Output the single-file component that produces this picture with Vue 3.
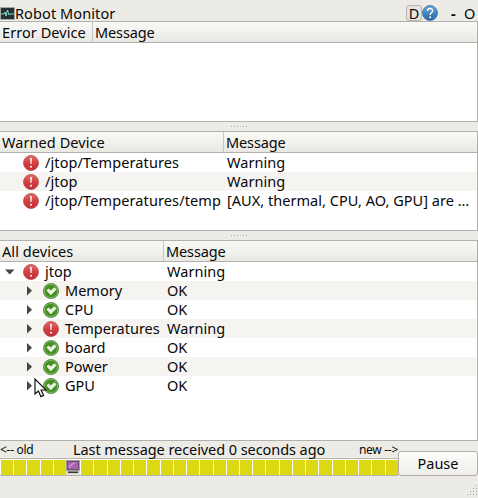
<script setup>
const warned = [
  { name: '/jtop/Temperatures', message: 'Warning' },
  { name: '/jtop', message: 'Warning' },
  { name: '/jtop/Temperatures/temp', message: '[AUX, thermal, CPU, AO, GPU] are …' },
]
const devices = [
  { name: 'jtop', message: 'Warning', ok: false, root: true },
  { name: 'Memory', message: 'OK', ok: true },
  { name: 'CPU', message: 'OK', ok: true },
  { name: 'Temperatures', message: 'Warning', ok: false },
  { name: 'board', message: 'OK', ok: true },
  { name: 'Power', message: 'OK', ok: true },
  { name: 'GPU', message: 'OK', ok: true },
]
const current = 5
</script>

<template>
  <div class="window">
    <svg class="defs" width="0" height="0">
      <defs>
        <linearGradient id="red" x1="0" y1="0" x2="0" y2="1">
          <stop offset="0" stop-color="#e0706c" /><stop offset=".5" stop-color="#d43e40" /><stop offset="1" stop-color="#c02e36" />
        </linearGradient>
        <linearGradient id="blue" x1="0" y1="0" x2="0" y2="1">
          <stop offset="0" stop-color="#6ba7d6" /><stop offset="1" stop-color="#2468a8" />
        </linearGradient>
        <symbol id="warn" viewBox="0 0 16 16">
          <circle cx="8" cy="8" r="7.5" fill="url(#red)" stroke="#b8494a" stroke-width=".8" />
          <path d="M7.1 3h1.8l-.4 6h-1z" fill="#fff" /><circle cx="8" cy="11.7" r="1" fill="#fff" />
        </symbol>
        <symbol id="ok" viewBox="0 0 16 16">
          <circle cx="8" cy="8" r="7.6" fill="#35831c" stroke="#4a8a38" stroke-width=".7" />
          <circle cx="8" cy="8" r="6.6" fill="#45911f" stroke="#91bd7b" stroke-width=".8" />
          <path d="M3.5 7.4 5.5 5.5l2.1 2.1 3.9-3.3 2 2.1-5.7 5.8z" fill="#eaf2e5" />
        </symbol>
      </defs>
    </svg>

    <header class="title">
      <svg class="logo" viewBox="0 0 15 13">
        <rect width="15" height="13" rx="1" fill="#a4a7a4" /><rect x="1" y="1" width="13" height="11" fill="#263032" />
        <path d="M1 7h3l1-2 1 4 1.5-6L9 8l1-1h4" fill="none" stroke="#86d9cc" stroke-width="1" />
      </svg>
      <span class="name">Robot Monitor</span>
      <span class="dock">D</span>
      <svg class="help" viewBox="0 0 16 16">
        <circle cx="8" cy="8" r="7.5" fill="url(#blue)" stroke="#3471a8" stroke-width=".8" />
        <path d="M5.5 6C5.5 2.7 10.6 2.7 10.6 5.7 10.6 7.7 8.1 7.8 8.1 9.9" fill="none" stroke="#fff" stroke-width="1.4" />
        <circle cx="8.1" cy="12.3" r="1" fill="#fff" />
      </svg>
      <span class="minus">-</span>
      <span class="max">O</span>
    </header>

    <section class="table errors">
      <div class="head"><span class="first">Error Device</span><span class="msg">Message</span></div>
    </section>
    <div class="splitter"><i v-for="n in 6" :key="n" /></div>

    <section class="table warned">
      <div class="head"><span class="first">Warned Device</span><span class="msg">Message</span></div>
      <div v-for="w in warned" :key="w.name" class="row">
        <div class="first">
          <svg class="status"><use href="#warn" /></svg><span class="path">{{ w.name }}</span>
        </div>
        <span class="value">{{ w.message }}</span>
      </div>
    </section>
    <div class="splitter"><i v-for="n in 6" :key="n" /></div>

    <section class="table all">
      <div class="head"><span class="first">All devices</span><span class="msg">Message</span></div>
      <div v-for="d in devices" :key="d.name" class="row">
        <div class="first" :class="{ child: !d.root }">
          <svg class="arrow" viewBox="0 0 10 10">
            <path :d="d.root ? 'M0 2.5h9.5L4.75 7.5z' : 'M2 0v9.5l5-4.75z'" fill="#454543" />
          </svg>
          <svg class="status"><use :href="d.ok ? '#ok' : '#warn'" /></svg><span>{{ d.name }}</span>
        </div>
        <span class="value">{{ d.message }}</span>
      </div>
      <svg class="cursor" viewBox="0 0 13 20">
        <path d="M1 1v15l3.4-3 2.5 5.6 2.7-1.2L7.2 12H12z" fill="#fff" stroke="#111" stroke-width="1.2" />
      </svg>
    </section>

    <footer class="foot">
      <div class="history">
        <div class="labels"><span class="small">&lt;-- old</span><span class="last">Last message received 0 seconds ago</span><span class="small new">new --&gt;</span></div>
        <div class="timeline">
          <div v-for="n in 30" :key="n" class="tick">
            <svg v-if="n - 1 === current" class="computer" viewBox="0 0 14 15">
              <path d="M0 0h14v15H0z" fill="#e6e3d8" />
              <rect x=".5" y=".5" width="13" height="10" fill="#c9c4c8" stroke="#a5a0a7" />
              <rect x="1.5" y="1.5" width="11" height="8" fill="#a963ac" stroke="#6d4b72" />
              <path d="M2.5 6 7 2.5H10L3 8z" fill="#cc8bc9" />
              <path d="M1 11h12v3H1z" fill="#d6d6ce" /><path d="M2 11.5h10v1.5H2z" fill="#373a32" />
            </svg>
          </div>
        </div>
      </div>
      <button class="pause">Pause</button>
    </footer>
    <svg class="grip" viewBox="0 0 12 12">
      <path d="M10 0h1v1h-1zM7 3h1v1H7zM10 3h1v1h-1zM4 6h1v1H4zM7 6h1v1H7zM10 6h1v1h-1zM1 9h1v1H1zM4 9h1v1H4zM7 9h1v1H7zM10 9h1v1h-1z" fill="#aaa7a1" />
    </svg>
  </div>
</template>

<style>
body { margin: 0; overflow: hidden; }
</style>
<style scoped>
* { box-sizing: border-box; }
.window { width: 478px; height: 498px; background: #edebe6; display: flex; flex-direction: column; font: 14.5px/19px "Noto Sans", sans-serif; color: #080808; white-space: nowrap; overflow: hidden; }
svg { display: block; flex: none; }
.defs { position: absolute; }
.title { height: 21px; flex: none; display: flex; align-items: flex-start; padding-top: 4px; }
.logo { width: 15px; height: 13px; margin-top: 3px; }
.name { flex: 1; letter-spacing: .1px; }
.dock { width: 16px; height: 16px; margin-top: 1px; border: 1px solid #b9b6b1; border-radius: 3px; text-align: center; line-height: 15px; background: #e7e4df; }
.help { width: 16px; height: 16px; margin-top: 1px; }
.minus { width: 7px; margin-left: 13px; font-weight: bold; }
.max { width: 14px; margin-left: 6px; }
.table { border: 1px solid #b3b1ad; border-left: 0; background: #fff; flex: none; position: relative; }
.errors { height: 101px; --col: 93px; }
.warned { height: 100px; --col: 224px; }
.all { height: 201px; --col: 164px; }
.head { display: flex; height: 21px; background: linear-gradient(#f8f8f5, #f0f0eb 60%, #e8e7e2); border-bottom: 1px solid #b3b1ad; line-height: 21px; }
.first { width: var(--col); flex: none; }
.head .first { border-right: 1px solid #c9c7c3; padding-left: 2px; letter-spacing: .07px; }
.msg { padding-left: 2px; letter-spacing: -.12px; }
.row { display: flex; height: 19px; }
.row:nth-child(odd) { background: #f5f4f1; }
.row .first { display: flex; align-items: center; }
.warned .row .first { padding-left: 23px; }
.path { letter-spacing: .11px; }
.status { width: 16px; height: 16px; margin-right: 6px; }
.arrow { width: 10px; height: 10px; margin: 0 8px 0 5px; }
.child { padding-left: 20px; }
.row .value { padding-left: 3px; letter-spacing: .03px; }
.splitter { height: 9px; flex: none; display: flex; gap: 2px; justify-content: center; padding-top: 4px; }
.splitter i { width: 1px; height: 1px; background: #aaa7a2; }
.cursor { position: absolute; left: 34px; top: 137px; width: 13px; height: 20px; }
.foot { display: flex; height: 35px; flex: none; }
.history { width: 398px; }
.labels { height: 17px; display: flex; line-height: 17px; }
.small { font-size: 12px; letter-spacing: -.3px; width: 73px; }
.last { letter-spacing: -.07px; flex: 1; }
.new { width: auto; }
.timeline { height: 18px; display: flex; border-top: 1px solid #b5b3af; border-bottom: 1px solid #b5b3af; background: #fff; padding-top: 1px; }
.tick { flex: 1; background: #ddd811; border-left: 1px solid #fff; }
.computer { width: 14px; height: 15px; margin-left: -1px; }
.pause { width: 80px; height: 25px; margin-top: 10px; padding: 0; border: 1px solid #b1aea9; border-radius: 3px; background: linear-gradient(#fdfdfc, #efeeea); font: inherit; color: inherit; }
.grip { width: 12px; height: 12px; margin: 9px 0 0 auto; }
</style>
